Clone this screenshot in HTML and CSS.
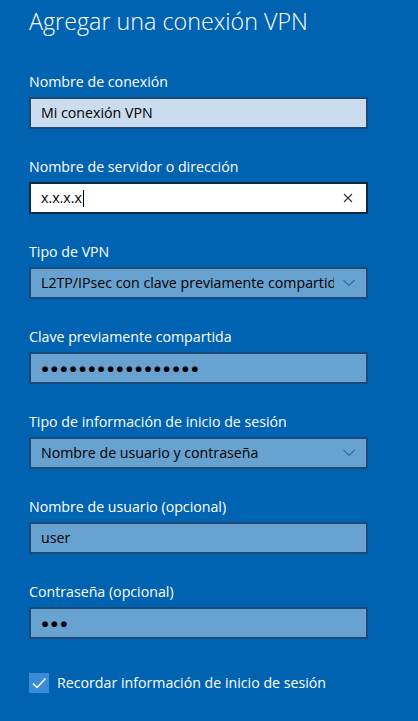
FILE: index.html
```html
<!DOCTYPE html>
<html lang="es">
<head>
  <meta charset="UTF-8" />
  <meta name="viewport" content="width=device-width, initial-scale=1.0"/>
  <title>Agregar una conexión VPN</title>
  <link rel="stylesheet" href="styles.css">
</head>
<body>
  <main class="panel">
    <h1 class="title">Agregar una conexión VPN</h1>

    <div class="fields">
      <div class="field">
        <label class="field-label">Nombre de conexión</label>
        <div class="box box-hover"><span class="box-text">Mi conexión VPN</span></div>
      </div>

      <div class="field">
        <label class="field-label">Nombre de servidor o dirección</label>
        <div class="box box-focus">
          <span class="box-text">x.x.x.x</span><span class="caret"></span>
          <svg class="clear-icon" width="10" height="10" viewBox="0 0 10 10">
            <path d="M1 1 L9 9 M9 1 L1 9" stroke="#333" stroke-width="1.1" fill="none"/>
          </svg>
        </div>
      </div>

      <div class="field">
        <label class="field-label">Tipo de VPN</label>
        <div class="box box-select">
          <span class="box-text">L2TP/IPsec con clave previamente compartida</span>
          <svg class="chevron" width="14" height="8" viewBox="0 0 14 8">
            <path d="M1.5 1 L7 6.5 L12.5 1" stroke="#3c6896" stroke-width="1.1" fill="none"/>
          </svg>
        </div>
      </div>

      <div class="field">
        <label class="field-label">Clave previamente compartida</label>
        <div class="box"><span class="dots">●●●●●●●●●●●●●●●●●</span></div>
      </div>

      <div class="field">
        <label class="field-label">Tipo de información de inicio de sesión</label>
        <div class="box box-select">
          <span class="box-text">Nombre de usuario y contraseña</span>
          <svg class="chevron" width="14" height="8" viewBox="0 0 14 8">
            <path d="M1.5 1 L7 6.5 L12.5 1" stroke="#3c6896" stroke-width="1.1" fill="none"/>
          </svg>
        </div>
      </div>

      <div class="field">
        <label class="field-label">Nombre de usuario (opcional)</label>
        <div class="box"><span class="box-text">user</span></div>
      </div>

      <div class="field">
        <label class="field-label">Contraseña (opcional)</label>
        <div class="box"><span class="dots">●●●</span></div>
      </div>
    </div>

    <div class="check-row">
      <span class="checkbox">
        <svg width="20" height="20" viewBox="0 0 20 20">
          <path d="M4 10.5 L8 14.5 L16.5 5.5" stroke="#fff" stroke-width="1.4" fill="none"/>
        </svg>
      </span>
      <span class="check-label">Recordar información de inicio de sesión</span>
    </div>
  </main>
</body>
</html>
```

FILE: styles.css
```css
body {
  margin: 0;
  background-color: #0063b1;
  color: #fff;
  font-family: 'Open Sans', 'Noto Sans', sans-serif;
}

.panel {
  width: 339px;
  padding: 5px 0 0 29px;
}

.title {
  margin: 0;
  font-size: 23.3px;
  font-weight: 300;
  line-height: 32px;
}

.fields {
  display: flex;
  flex-direction: column;
  gap: 28px;
  margin-top: 35px;
}

.field-label {
  display: block;
  font-size: 14.2px;
  line-height: 20px;
  margin-bottom: 5px;
}

.box {
  display: flex;
  align-items: center;
  height: 32px;
  box-sizing: border-box;
  padding: 0 10px;
  border: 2px solid #1c4a78;
  background-color: #68a2d0;
  color: #000;
  font-size: 14.2px;
  line-height: 28px;
}

.box-hover {
  background-color: #cadcee;
}

.box-focus {
  background-color: #fff;
  border-color: #0b2a4a;
}

.box-text {
  flex: 1;
  min-width: 0;
  white-space: nowrap;
  overflow: hidden;
}

.box-focus .box-text {
  flex: none;
}

.caret {
  width: 1px;
  height: 17px;
  background-color: #000;
  margin-left: 1px;
}

.clear-icon {
  margin-left: auto;
  margin-right: 3px;
}

.chevron {
  flex: none;
  margin-left: 8px;
}

.dots {
  font-size: 13.5px;
  letter-spacing: 1.2px;
}

.check-row {
  display: flex;
  align-items: center;
  gap: 8px;
  margin-top: 34px;
}

.checkbox {
  display: flex;
  width: 20px;
  height: 20px;
  background-color: #3a8cd8;
}

.check-label {
  font-size: 14.2px;
  line-height: 20px;
}
```
